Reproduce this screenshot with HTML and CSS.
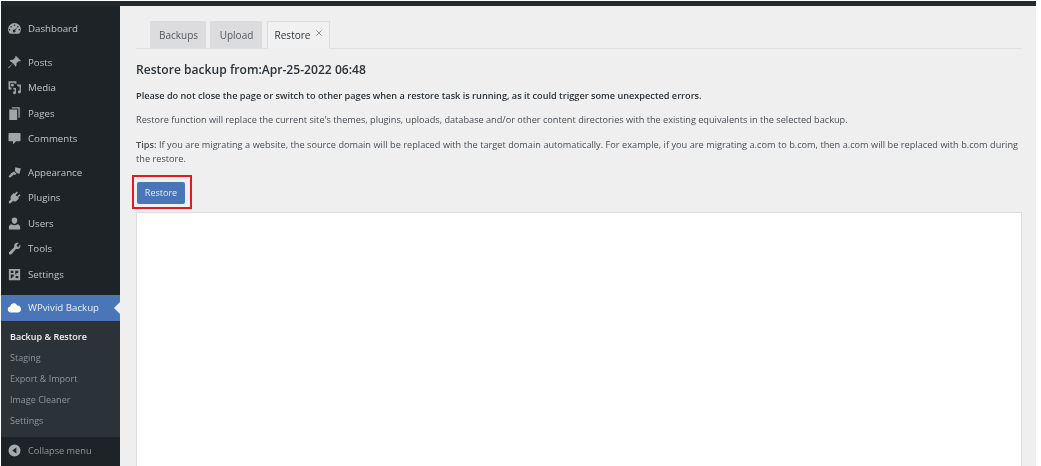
FILE: index.html
```html
<!DOCTYPE html>
<html lang="en">
<head>
  <meta charset="UTF-8" />
  <title>WPvivid Backup</title>
  <link rel="stylesheet" href="styles.css">
</head>
<body>
  <div class="frame">
    <div class="topbar"></div>
    <div class="layout">

      <!-- Admin menu -->
      <nav class="sidebar">
        <div class="menu-group first">
          <a class="menu-item"><svg class="icon" viewBox="0 0 20 20"><path fill-rule="evenodd" d="M10 2.500a8.500 8.500 0 0 0-8.500 8.500c0 2.300.9 4.400 2.400 6h12.200a8.500 8.500 0 0 0 2.400-6A8.500 8.500 0 0 0 10 2.500zm0 2a1 1 0 1 1 0 2 1 1 0 0 1 0-2zM5.500 6.500a1 1 0 1 1 0 2 1 1 0 0 1 0-2zm9 0a1 1 0 1 1 0 2 1 1 0 0 1 0-2zm-.7 2L11 12.200a1.800 1.800 0 1 1-1.300-.7zM3.500 10.500a1 1 0 1 1 0 2 1 1 0 0 1 0-2zm13 0a1 1 0 1 1 0 2 1 1 0 0 1 0-2z"/></svg>Dashboard</a>
        </div>
        <div class="menu-group">
          <a class="menu-item"><svg class="icon" viewBox="0 0 20 20"><path d="M12.500 1.500l6 6-1.400 1-1.200-.6-3.400 3.400c.5 1.700.1 3.300-.9 4.400L8 11.100l-5.500 6.400-1-1L7.900 11 3.300 7.500c1.100-1 2.700-1.400 4.400-.9l3.400-3.400-.6-1.200z"/></svg>Posts</a>
          <a class="menu-item"><svg class="icon" viewBox="0 0 20 20"><path fill-rule="evenodd" d="M2 1.500h10.500V5h-2.300V3.800H4.300V10H6v2.500H2zM7.200 4.500a2 2 0 1 1 0 4 2 2 0 0 1 0-4zM13 6h5.500v10a2 2 0 1 1-1.700-2V8.500h-2.300zM8.500 10.200l3.500.5V17a2 2 0 1 1-1.700-2v-2.300l-1.800-.2z"/></svg>Media</a>
          <a class="menu-item"><svg class="icon" viewBox="0 0 20 20"><path d="M6.500 1.500H17v14h-1.800V3.300H6.500zM3 4.500h10.500v14H3z"/></svg>Pages</a>
          <a class="menu-item"><svg class="icon" viewBox="0 0 20 20"><path d="M3 2.500h14a1 1 0 0 1 1 1v9a1 1 0 0 1-1 1h-5l-4 4.500v-4.500H3a1 1 0 0 1-1-1v-9a1 1 0 0 1 1-1z"/></svg>Comments</a>
        </div>
        <div class="menu-group">
          <a class="menu-item"><svg class="icon" viewBox="0 0 20 20"><path d="M11 3l7.500 1.500-2 7.500-3.500-1.500-2.500-3zM9.500 8.500l3.200 3-2.200 1.700-1.500-.5-5 4.300-2-1.800 4.300-5z"/></svg>Appearance</a>
          <a class="menu-item"><svg class="icon" viewBox="0 0 20 20"><path d="M13 2l1.500 1.500-3 3 2 2 3-3L18 7l-3 3 1 1-3.500 3.500c-1.500 1-3.300 1-4.700.2L5 17.500H2.500V15l2.800-2.800c-.8-1.400-.8-3.200.2-4.700L9 4l1 1z"/></svg>Plugins</a>
          <a class="menu-item"><svg class="icon" viewBox="0 0 20 20"><path d="M10 2a3.700 3.700 0 0 1 3.700 4c0 2-1.500 4.500-3.700 4.500S6.300 8 6.300 6A3.700 3.700 0 0 1 10 2zM6 11c1 .9 2.500 1.300 4 1.300s3-.4 4-1.300c2 .3 3.500 1.800 3.500 3.500V18h-15v-3.500C2.500 12.800 4 11.300 6 11z"/></svg>Users</a>
          <a class="menu-item"><svg class="icon" viewBox="0 0 20 20"><path d="M17.500 4.500c.7 1.800.3 3.700-1 5-1.200 1.200-3 1.600-4.600 1.100L6 17.500c-.8.800-2.200.8-3 0s-.7-2 .1-2.800l6.500-6.300c-.5-1.600-.1-3.500 1.100-4.700 1.300-1.300 3.200-1.700 5-1l-3.200 3.200 2.500 2.500z"/></svg>Tools</a>
          <a class="menu-item"><svg class="icon" viewBox="0 0 20 20"><path fill-rule="evenodd" d="M2.500 2.500h15v15h-15zM5 5v3h3.500V5zm6 0v5h1.500V8H15V5zM5 10v5h2v-2h2v-3zm6.500 2v3H15v-3z"/></svg>Settings</a>
        </div>
        <a class="menu-item current"><svg class="icon" viewBox="0 0 20 20"><path d="M5 16.500a4 4 0 0 1-.8-7.900 5 5 0 0 1 9.500-1.300 4.700 4.700 0 0 1 1.500 9.200z"/></svg>WPvivid Backup</a>
        <div class="submenu">
          <a class="sub-item active">Backup &amp; Restore</a>
          <a class="sub-item">Staging</a>
          <a class="sub-item">Export &amp; Import</a>
          <a class="sub-item">Image Cleaner</a>
          <a class="sub-item">Settings</a>
        </div>
        <a class="menu-item collapse"><svg class="icon" viewBox="0 0 20 20"><path fill-rule="evenodd" d="M10 2a8 8 0 1 1 0 16 8 8 0 0 1 0-16zm2.500 4L7 10l5.500 4z"/></svg>Collapse menu</a>
      </nav>

      <!-- Restore tab -->
      <main class="content">
        <div class="tabs">
          <span class="tab">Backups</span>
          <span class="tab">Upload</span>
          <span class="tab tab-active">Restore<svg class="tab-close" viewBox="0 0 10 10"><path d="M1.500 1.500l7 7M8.500 1.500l-7 7"/></svg></span>
        </div>
        <h2>Restore backup from:Apr-25-2022 06:48</h2>
        <p class="warning">Please do not close the page or switch to other pages when a restore task is running, as it could trigger some unexpected errors.</p>
        <p>Restore function will replace the current site's themes, plugins, uploads, database and/or other content directories with the existing equivalents in the selected backup.</p>
        <p class="tips"><strong>Tips:</strong> If you are migrating a website, the source domain will be replaced with the target domain automatically. For example, if you are migrating a.com to b.com, then a.com will be replaced with b.com during the restore.</p>
        <div class="highlight"><button>Restore</button></div>
        <div class="log-box"></div>
      </main>

    </div>
  </div>
</body>
</html>
```

FILE: styles.css
```css
body {
  margin: 0;
  background: #ffffff;
  font-family: "Open Sans", sans-serif;
}
.frame {
  width: 1035px;
  height: 466px;
  margin-left: 1px;
  padding-top: 1px;
  box-sizing: border-box;
  display: flex;
  flex-direction: column;
  overflow: hidden;
  filter: blur(0.35px);
}
.topbar {
  height: 5px;
  background: #23282d;
  flex: none;
}
.layout {
  display: flex;
  flex: 1;
  min-height: 0;
}
.sidebar {
  width: 119px;
  flex: none;
  background: #1d2327;
  padding-top: 10px;
  box-sizing: border-box;
}
.menu-group {
  margin-bottom: 8px;
}
.menu-item {
  display: flex;
  align-items: center;
  height: 25.5px;
  padding-left: 6px;
  color: #c3c4c7;
  font-size: 9.7px;
}
.icon {
  width: 15px;
  height: 15px;
  margin-right: 6px;
  fill: #a0a5aa;
  flex: none;
}
.current {
  background: #4a76b8;
  color: #eaeef5;
  position: relative;
}
.current .icon {
  fill: #ffffff;
}
.current::after {
  content: "";
  position: absolute;
  right: 0;
  top: 7px;
  border: 6px solid transparent;
  border-right-color: #f0f0f0;
  border-left-width: 0;
}
.submenu {
  background: #2c3338;
  height: 116px;
  padding-top: 5.5px;
  box-sizing: border-box;
}
.sub-item {
  display: flex;
  align-items: center;
  height: 21px;
  padding-left: 9px;
  color: #8f9498;
  font-size: 9px;
}
.sub-item.active {
  color: #f0f0f1;
  font-weight: 600;
}
.collapse {
  color: #8f9498;
  margin-top: 1px;
  font-size: 9.2px;
}
.collapse .icon {
  fill: #a7aaad;
}
.content {
  flex: 1;
  background: #efefef;
  padding: 15px 14px 0 16px;
  min-width: 0;
  overflow: hidden;
  color: #484e54;
  font-size: 9.17px;
}
.tabs {
  display: flex;
  gap: 4px;
  padding-left: 14px;
  border-bottom: 1px solid #e2e2e3;
  height: 27px;
}
.tab {
  background: #dcdcde;
  color: #50575e;
  font-size: 10px;
  width: 56px;
  padding-left: 1px;
  box-sizing: border-box;
  justify-content: center;
  display: flex;
  align-items: center;
  height: 27px;
}
.tab + .tab {
  width: 52px;
}
.tab-active.tab-active {
  background: #f1f1f1;
  color: #2c3338;
  border: 1px solid #dcdcde;
  border-bottom: 1px solid #efefef;
  margin-left: 1px;
  width: 63px;
  height: 28px;
}
.tab-close {
  width: 8px;
  height: 8px;
  margin: -5px 0 0 5px;
  stroke: #8c8f94;
  stroke-width: 1.2;
  fill: none;
}
h2 {
  font-size: 12.1px;
  font-weight: 600;
  color: #2c3338;
  margin: 12px 0 0;
  line-height: 17px;
}
p {
  margin: 10px 0 0;
  line-height: 14px;
}
.warning {
  font-weight: 600;
  color: #2c3338;
  margin-top: 10.5px;
}
.tips {
  margin-top: 11px;
  word-spacing: 0.15px;
}
strong {
  font-weight: 600;
}
.highlight {
  width: 60px;
  height: 34px;
  box-sizing: border-box;
  margin: 9px 0 0 -4px;
  border: 2px solid #e01b24;
  padding: 5px 0 0 3px;
}
button {
  display: block;
  background: #4a76b8;
  color: #e8edf5;
  border: none;
  border-radius: 2px;
  font-family: inherit;
  font-size: 9px;
  width: 48px;
  height: 22px;
  padding: 0;
}
.log-box {
  background: #ffffff;
  border: 1px solid #dcdcde;
  height: 300px;
  margin-top: 3px;
}
```
